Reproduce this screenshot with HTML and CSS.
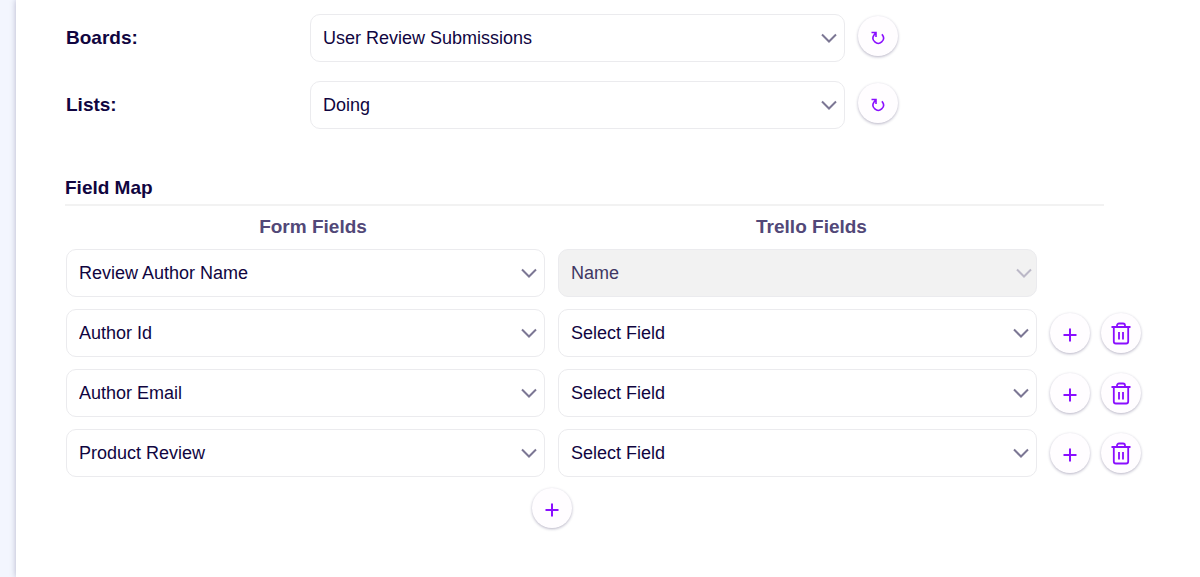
FILE: index.html
```html
<!DOCTYPE html>
<html lang="en">
<head>
<meta charset="utf-8">
<meta name="viewport" content="width=device-width, initial-scale=1">
<title>Trello Integration</title>
<link rel="stylesheet" href="styles.css">
</head>
<body>
<svg class="symbols" aria-hidden="true">
  <symbol id="chevron" viewBox="0 0 16 10"><path d="M1 1.5 8 8.5 15 1.5"/></symbol>
  <symbol id="plus" viewBox="0 0 14 14"><path d="M7 .5v13M.5 7h13"/></symbol>
  <symbol id="refresh" viewBox="0 0 14 14"><path d="M.5 1.500H5V6M4.800 1.800 2.900 4.200A5.200 5.200 0 1 0 11.600 4.200L10.800 3.400"/></symbol>
  <symbol id="trash" viewBox="0 0 20 24"><path d="M.5 6h19M2.800 6V20.500a2 2 0 0 0 2 2h10.400a2 2 0 0 0 2-2V6M6 6V4.500a2 2 0 0 1 2-2h4a2 2 0 0 1 2 2V6M8 11v7.500M12 11v7.500"/></symbol>
</svg>
<main class="panel">
  <section class="settings">
    <div class="setting">
      <label class="setting-label" for="boards">Boards:</label>
      <div class="dropdown"><select id="boards"><option>User Review Submissions</option></select><svg class="chevron"><use href="#chevron"/></svg></div>
      <button class="round" type="button" aria-label="Refresh boards"><svg class="refresh"><use href="#refresh"/></svg></button>
    </div>
    <div class="setting">
      <label class="setting-label" for="lists">Lists:</label>
      <div class="dropdown"><select id="lists"><option>Doing</option></select><svg class="chevron"><use href="#chevron"/></svg></div>
      <button class="round" type="button" aria-label="Refresh lists"><svg class="refresh"><use href="#refresh"/></svg></button>
    </div>
  </section>

  <section class="map">
    <h2 class="map-title">Field Map</h2>
    <div class="map-row map-head">
      <div>Form Fields</div>
      <div>Trello Fields</div>
    </div>
    <div class="map-rows">
      <div class="map-row">
        <div class="dropdown"><select aria-label="Form field 1"><option>Review Author Name</option></select><svg class="chevron"><use href="#chevron"/></svg></div>
        <div class="dropdown locked"><select aria-label="Trello field 1" disabled><option>Name</option></select><svg class="chevron"><use href="#chevron"/></svg></div>
      </div>
      <div class="map-row">
        <div class="dropdown"><select aria-label="Form field 2"><option>Author Id</option></select><svg class="chevron"><use href="#chevron"/></svg></div>
        <div class="dropdown"><select aria-label="Trello field 2"><option>Select Field</option></select><svg class="chevron"><use href="#chevron"/></svg></div>
        <div class="actions">
          <button class="round" type="button" aria-label="Add row"><svg class="plus"><use href="#plus"/></svg></button>
          <button class="round" type="button" aria-label="Delete row"><svg class="trash"><use href="#trash"/></svg></button>
        </div>
      </div>
      <div class="map-row">
        <div class="dropdown"><select aria-label="Form field 3"><option>Author Email</option></select><svg class="chevron"><use href="#chevron"/></svg></div>
        <div class="dropdown"><select aria-label="Trello field 3"><option>Select Field</option></select><svg class="chevron"><use href="#chevron"/></svg></div>
        <div class="actions">
          <button class="round" type="button" aria-label="Add row"><svg class="plus"><use href="#plus"/></svg></button>
          <button class="round" type="button" aria-label="Delete row"><svg class="trash"><use href="#trash"/></svg></button>
        </div>
      </div>
      <div class="map-row">
        <div class="dropdown"><select aria-label="Form field 4"><option>Product Review</option></select><svg class="chevron"><use href="#chevron"/></svg></div>
        <div class="dropdown"><select aria-label="Trello field 4"><option>Select Field</option></select><svg class="chevron"><use href="#chevron"/></svg></div>
        <div class="actions">
          <button class="round" type="button" aria-label="Add row"><svg class="plus"><use href="#plus"/></svg></button>
          <button class="round" type="button" aria-label="Delete row"><svg class="trash"><use href="#trash"/></svg></button>
        </div>
      </div>
    </div>
    <div class="map-footer">
      <button class="round" type="button" aria-label="Add field"><svg class="plus"><use href="#plus"/></svg></button>
    </div>
  </section>
</main>
</body>
</html>
```
FILE: styles.css
```css
* {
  box-sizing: border-box;
}

body {
  margin: 0;
  padding-left: 16px;
  background: #f3f6fe;
  color: #10053f;
  font-family: "Liberation Sans", Arial, sans-serif;
  font-size: 18px;
}

.symbols {
  position: absolute;
  width: 0;
  height: 0;
}

svg {
  fill: none;
  stroke: currentColor;
}

.panel {
  min-height: 100vh;
  padding: 14px 59px 40px 50px;
  background: #fff;
  box-shadow: 0 0 6px rgba(16, 5, 63, 0.27);
}

.settings {
  display: grid;
  gap: 19px;
}

.setting {
  display: grid;
  grid-template-columns: 231px minmax(0, 535px) 40px;
  column-gap: 13px;
}

.setting-label {
  padding-top: 13px;
  font-size: 19px;
  font-weight: 700;
  line-height: 22px;
}

.dropdown {
  display: grid;
  align-items: center;
}

.dropdown > * {
  grid-area: 1 / 1;
}

select {
  width: 100%;
  height: 48px;
  padding: 0 40px 0 12px;
  appearance: none;
  border: 1px solid #ebebee;
  border-radius: 10px;
  background: #fff;
  color: inherit;
  font: inherit;
}

.chevron {
  width: 16px;
  height: 10px;
  margin-right: 8px;
  justify-self: end;
  color: #7c7794;
  stroke-width: 2;
  pointer-events: none;
}

.locked select {
  background: #f2f2f2;
  color: #3f3763;
  opacity: 1;
}

.locked .chevron {
  margin-right: 5px;
  color: #bbb8c7;
}

.round {
  display: grid;
  place-items: center;
  width: 40px;
  height: 40px;
  padding: 0;
  border: 0;
  border-radius: 50%;
  background: #fffdff;
  box-shadow: 0 1px 3px rgba(16, 5, 63, 0.3);
  color: #8a0fff;
}

.setting .round {
  margin-top: 2px;
}

.refresh {
  width: 14px;
  height: 14px;
  margin-top: 3px;
  stroke-width: 1.6;
}

.plus {
  width: 14px;
  height: 14px;
  margin-top: 3px;
  stroke-width: 2;
}

.trash {
  width: 20px;
  height: 24px;
  stroke-width: 1.8;
}

.map-title {
  margin: 48px 37px 0 -1px;
  padding-bottom: 5px;
  border-bottom: 2px solid #f2f2f2;
  font-size: 19px;
  line-height: 22px;
}

.map-row {
  display: grid;
  grid-template-columns: 1fr 1fr 91px;
  column-gap: 13px;
  align-items: center;
}

.map-head {
  padding: 10px 0 11px;
  color: #524878;
  font-size: 19px;
  font-weight: 700;
  line-height: 22px;
  text-align: center;
}

.map-head > :first-child {
  padding-left: 15px;
}

.map-head > :last-child {
  padding-left: 28px;
}

.map-rows {
  display: grid;
  gap: 12px;
}

.actions {
  display: flex;
  gap: 11px;
}

.map-footer {
  display: flex;
  justify-content: center;
  padding: 11px 104px 0 0;
}
```
